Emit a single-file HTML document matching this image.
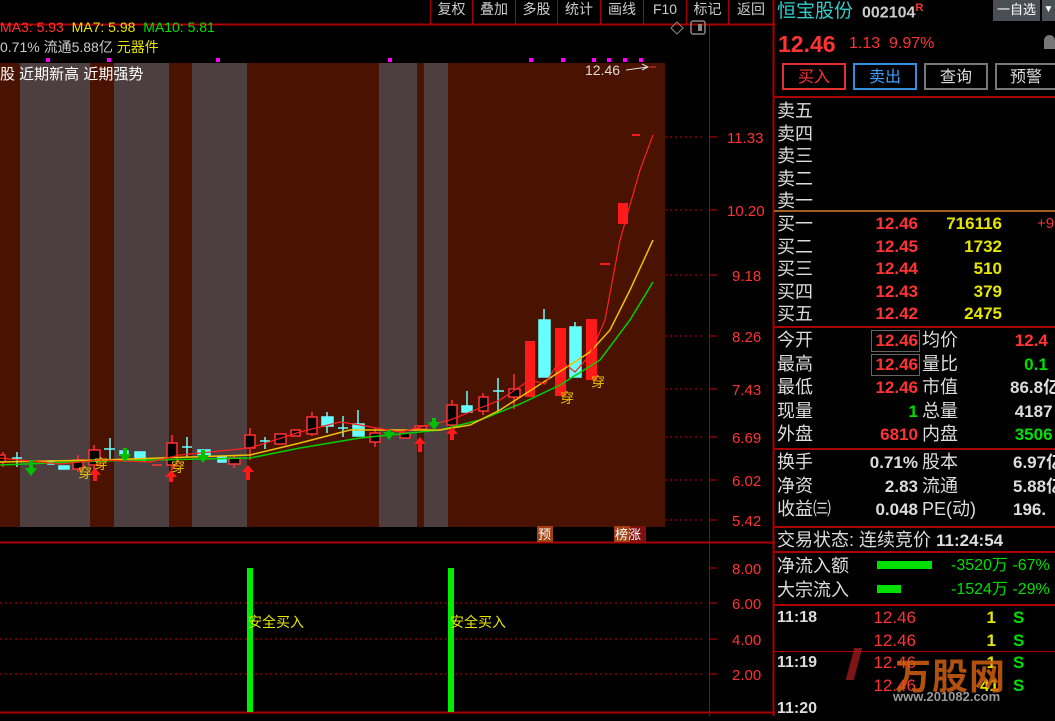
<!DOCTYPE html>
<html><head><meta charset="utf-8">
<style>
*{margin:0;padding:0;box-sizing:border-box}
body{width:1055px;height:716px;background:#000;overflow:hidden;position:relative;font-family:"Liberation Sans","Noto Sans CJK SC",sans-serif;color:#ddd}
.a{position:absolute;white-space:nowrap}
.tb{position:absolute;top:0;height:24px;border-left:1px solid #a00;color:#ccc;font-size:14px;line-height:18px;text-align:center}
.r{color:#ff3333}.y{color:#e6e600}.g{color:#00e000}.w{color:#ddd}.c{color:#33cccc}
.row{position:absolute;left:777px;font-size:18px;line-height:22px;white-space:nowrap}
.btn{position:absolute;top:63px;width:64px;height:27px;font-size:16px;line-height:25px;text-align:center;border:2px solid #777}
.num{position:absolute;font-size:17px;font-weight:bold;line-height:22px;text-align:right;white-space:nowrap}
.hl{position:absolute;left:774px;width:281px;height:2px;background:#a00}
</style></head><body>

<svg class="a" style="left:0;top:0" width="775" height="716">
<rect x="0" y="63" width="665" height="464" fill="#4a1200"/>
<g fill="#4d3f3f">
<rect x="20" y="63" width="70" height="464"/><rect x="114" y="63" width="55" height="464"/><rect x="192" y="63" width="55" height="464"/><rect x="379" y="63" width="38" height="464"/><rect x="424" y="63" width="24" height="464"/>
</g>
<g fill="#ff00ff"><rect x="46" y="58" width="4" height="4"/><rect x="107" y="58" width="4" height="4"/><rect x="216" y="58" width="4" height="4"/><rect x="388" y="58" width="4" height="4"/><rect x="529" y="58" width="4" height="4"/><rect x="561" y="58" width="4" height="4"/><rect x="592" y="58" width="4" height="4"/><rect x="607" y="58" width="4" height="4"/><rect x="623" y="58" width="4" height="4"/><rect x="639" y="58" width="4" height="4"/></g>
<line x1="0" y1="24.5" x2="775" y2="24.5" stroke="#a00" stroke-width="2"/>
<line x1="709.5" y1="24" x2="709.5" y2="716" stroke="#a00"/>
<line x1="773.5" y1="0" x2="773.5" y2="716" stroke="#a00" stroke-width="2"/>
<line x1="0" y1="542.5" x2="775" y2="542.5" stroke="#a00" stroke-width="2"/>
<line x1="0" y1="712.5" x2="775" y2="712.5" stroke="#a00" stroke-width="2"/>
<g stroke="#c00" stroke-dasharray="2,3">
<line x1="665" y1="137" x2="705" y2="137"/><line x1="665" y1="210" x2="705" y2="210"/><line x1="665" y1="275" x2="705" y2="275"/><line x1="665" y1="336" x2="705" y2="336"/><line x1="665" y1="389" x2="705" y2="389"/><line x1="665" y1="437" x2="705" y2="437"/><line x1="665" y1="480" x2="705" y2="480"/><line x1="665" y1="520" x2="705" y2="520"/>
<line x1="0" y1="603" x2="705" y2="603"/><line x1="0" y1="639" x2="705" y2="639"/><line x1="0" y1="674" x2="705" y2="674"/>
</g>
<g stroke="#c00"><line x1="709" y1="137" x2="717" y2="137"/><line x1="709" y1="210" x2="717" y2="210"/><line x1="709" y1="275" x2="717" y2="275"/><line x1="709" y1="336" x2="717" y2="336"/><line x1="709" y1="389" x2="717" y2="389"/><line x1="709" y1="437" x2="717" y2="437"/><line x1="709" y1="480" x2="717" y2="480"/><line x1="709" y1="520" x2="717" y2="520"/><line x1="709" y1="568" x2="717" y2="568"/><line x1="709" y1="603" x2="717" y2="603"/><line x1="709" y1="639" x2="717" y2="639"/><line x1="709" y1="674" x2="717" y2="674"/></g>
<g fill="#ff3333" font-family="Liberation Sans" font-size="15">
<text x="727" y="143">11.33</text><text x="727" y="216">10.20</text><text x="732" y="281">9.18</text><text x="732" y="342">8.26</text><text x="732" y="395">7.43</text><text x="732" y="443">6.69</text><text x="732" y="486">6.02</text><text x="732" y="526">5.42</text>
<text x="732" y="574">8.00</text><text x="732" y="609">6.00</text><text x="732" y="645">4.00</text><text x="732" y="680">2.00</text>
</g>
<g stroke="#ff3333" stroke-width="1.5" fill="#000">
<line x1="3" y1="452" x2="3" y2="467"/><rect x="-2" y="455" width="7" height="7"/>
<line x1="78" y1="455" x2="78" y2="472"/><rect x="73" y="460" width="10" height="9"/>
<line x1="94" y1="445" x2="94" y2="470"/><rect x="89" y="450" width="11" height="15"/>
<line x1="172" y1="435" x2="172" y2="470"/><rect x="167" y="443" width="10" height="22"/>
<line x1="234" y1="455" x2="234" y2="468"/><rect x="229" y="458" width="11" height="6"/>
<line x1="250" y1="428" x2="250" y2="460"/><rect x="245" y="435" width="10" height="13"/>
<rect x="275" y="434" width="11" height="10"/><rect x="291" y="430" width="9" height="6"/>
<line x1="312" y1="412" x2="312" y2="436"/><rect x="307" y="417" width="10" height="17"/>
<line x1="375" y1="428" x2="375" y2="447"/><rect x="370" y="433" width="10" height="9"/>
<rect x="400" y="433" width="10" height="5"/><rect x="415" y="426" width="11" height="3"/>
<line x1="452" y1="400" x2="452" y2="430"/><rect x="447" y="405" width="10" height="20"/>
<line x1="483" y1="393" x2="483" y2="415"/><rect x="479" y="397" width="9" height="14"/>
<line x1="514" y1="374" x2="514" y2="409"/><rect x="509" y="389" width="11" height="8"/>
<line x1="152" y1="465" x2="162" y2="465"/>
</g>
<g fill="#ff1a1a">
<rect x="525" y="341" width="10" height="56"/><rect x="555" y="328" width="11" height="68"/><rect x="586" y="319" width="11" height="61"/>
<rect x="618" y="203" width="10" height="21"/><rect x="600" y="263" width="10" height="2"/><rect x="632" y="134" width="8" height="2"/>
</g>
<g stroke="#66ffff" stroke-width="1.5" fill="#66ffff">
<line x1="17" y1="452" x2="17" y2="467"/><line x1="12" y1="458" x2="22" y2="458"/>
<rect x="48" y="461" width="6" height="3"/><rect x="59" y="466" width="10" height="3"/>
<line x1="110" y1="438" x2="110" y2="460"/><line x1="104" y1="449" x2="115" y2="449"/>
<rect x="120" y="451" width="8" height="4"/><rect x="135" y="452" width="10" height="9"/>
<line x1="187" y1="437" x2="187" y2="457"/><line x1="182" y1="447" x2="192" y2="447"/>
<rect x="198" y="450" width="12" height="5"/><rect x="218" y="457" width="8" height="5"/>
<line x1="265" y1="437" x2="265" y2="449"/><line x1="260" y1="441" x2="270" y2="441"/>
<line x1="327" y1="412" x2="327" y2="433"/><rect x="322" y="417" width="11" height="9"/>
<line x1="343" y1="416" x2="343" y2="437"/><line x1="338" y1="428" x2="348" y2="428"/>
<line x1="358" y1="410" x2="358" y2="436"/><rect x="353" y="424" width="11" height="12"/>
<line x1="467" y1="391" x2="467" y2="412"/><rect x="462" y="406" width="10" height="6"/>
<line x1="498" y1="378" x2="498" y2="413"/><line x1="493" y1="391" x2="504" y2="391"/>
<line x1="544" y1="309" x2="544" y2="377"/><rect x="539" y="320" width="11" height="57"/>
<line x1="575" y1="322" x2="575" y2="377"/><rect x="570" y="327" width="11" height="50"/>
</g>
<polyline fill="none" stroke="#00d000" stroke-width="1.5" points="0,465 100,461 250,458 300,448 360,438 440,430 480,420 520,404 560,385 600,360 630,320 653,282"/>
<polyline fill="none" stroke="#f0c000" stroke-width="1.5" points="0,462 100,460 250,455 300,443 350,430 440,430 470,425 500,410 550,378 590,352 610,330 630,290 653,240"/>
<polyline fill="none" stroke="#ff2020" stroke-width="1.2" points="0,458 60,464 100,460 150,462 180,455 250,448 300,432 340,422 360,425 400,432 450,420 500,400 530,380 545,384 560,360 575,372 590,355 605,320 620,240 640,170 653,135"/>
<g fill="#00c000"><path d="M29,460h4v8h4l-6,8l-6,-8h4z"/><path d="M123,448h4v6h4l-6,8l-6,-8h4z"/><path d="M201,450h4v5h4l-6,8l-6,-8h4z"/><path d="M387,430h4v2h4l-6,8l-6,-8h4z"/><path d="M432,418h4v4h4l-6,8l-6,-8h4z"/></g>
<g fill="#ff1a1a"><path d="M95,468l6,7h-4v6h-4v-6h-4z"/><path d="M171,470l6,7h-4v5h-4v-5h-4z"/><path d="M248,465l6,7h-4v8h-4v-8h-4z"/><path d="M420,437l6,7h-4v8h-4v-8h-4z"/><path d="M452,427l6,7h-4v6h-4v-6h-4z"/></g>
<g fill="#e6c000" font-family="Noto Sans CJK SC" font-size="14"><text x="78" y="478">穿</text><text x="94" y="469">穿</text><text x="171" y="472">穿</text><text x="560" y="403">穿</text><text x="591" y="387">穿</text></g>
<text x="585" y="75" fill="#ddd" font-family="Liberation Sans" font-size="14">12.46</text>
<path d="M626,70l22,-3 M642,64l6,3l-6,3" stroke="#ddd" fill="none"/><line x1="650" y1="67" x2="656" y2="67" stroke="#f33"/>
<rect x="537" y="526" width="16" height="16" fill="#a04010"/><text x="538" y="539" fill="#fff" font-family="Noto Sans CJK SC" font-size="13">预</text>
<rect x="614" y="526" width="16" height="16" fill="#a04010"/><rect x="630" y="526" width="16" height="16" fill="#801010"/><text x="615" y="539" fill="#fff" font-family="Noto Sans CJK SC" font-size="13">榜涨</text>
<rect x="247" y="568" width="6" height="144" fill="#00ee00"/><rect x="448" y="568" width="6" height="144" fill="#00ee00"/>
<g fill="#e6e600" font-family="Noto Sans CJK SC" font-size="14"><text x="248" y="627">安全买入</text><text x="450" y="627">安全买入</text></g>
<path d="M677,22l6,6l-6,6l-6,-6z" fill="none" stroke="#888"/>
<rect x="691" y="21" width="14" height="13" rx="2" fill="none" stroke="#888" stroke-width="1.5"/><rect x="698" y="24" width="4" height="7" fill="#888"/>
</svg>

<div class="tb" style="left:430px;width:42px">复权</div><div class="tb" style="left:472px;width:43px">叠加</div><div class="tb" style="left:515px;width:42px">多股</div><div class="tb" style="left:557px;width:43px">统计</div><div class="tb" style="left:600px;width:43px">画线</div><div class="tb" style="left:643px;width:43px">F10</div><div class="tb" style="left:686px;width:42px">标记</div><div class="tb" style="left:728px;width:45px">返回</div>

<div class="a" style="left:0;top:19px;font-size:14px"><span class="r">MA3: 5.93</span>&nbsp; <span class="y">MA7: 5.98</span>&nbsp; <span class="g">MA10: 5.81</span></div>
<div class="a" style="left:0;top:37px;font-size:14px;color:#ccc">0.71% 流通5.88亿 <span class="y">元器件</span></div>
<div class="a" style="left:0;top:63px;font-size:15px;color:#fff">股 近期新高 近期强势</div>

<div class="a c" style="left:777px;top:0;font-size:19px;line-height:24px">恒宝股份</div>
<div class="a" style="left:862px;top:2px;font-size:16px;font-weight:bold;color:#ccc">002104<sup class="r" style="font-size:11px">R</sup></div>
<div class="a" style="left:993px;top:0;width:47px;height:21px;background:#4a4e55;color:#fff;font-size:13px;line-height:20px;text-align:center">一自选</div>
<div class="a" style="left:1042px;top:0;width:13px;height:21px;background:#4a4e55;color:#fff;font-size:10px;line-height:20px;text-align:center">▼</div>
<div class="a r" style="left:778px;top:31px;font-size:23px;font-weight:bold">12.46</div>
<div class="a r" style="left:849px;top:35px;font-size:16px">1.13&nbsp; 9.97%</div>
<div class="a" style="left:1044px;top:35px;width:11px;height:14px;background:#777;border-radius:6px 6px 0 0"></div>
<div class="btn r" style="left:782px;border-color:#e03030">买入</div>
<div class="btn" style="left:853px;border-color:#3090e0;color:#3aa0ff">卖出</div>
<div class="btn w" style="left:924px">查询</div>
<div class="btn w" style="left:995px;width:62px">预警</div>
<div class="hl" style="top:96px"></div>
<div class="row w" style="top:100px;line-height:22.5px">卖五<br>卖四<br>卖三<br>卖二<br>卖一</div>
<div class="a" style="left:774px;top:210px;width:281px;height:2px;background:#a06020"></div>
<div class="row w" style="top:213px;line-height:22.6px">买一<br>买二<br>买三<br>买四<br>买五</div>
<div class="num r" style="left:850px;top:213px;width:68px;line-height:22.6px">12.46<br>12.45<br>12.44<br>12.43<br>12.42</div>
<div class="num y" style="left:930px;top:213px;width:72px;line-height:22.6px">716116<br>1732<br>510<br>379<br>2475</div>
<div class="a r" style="left:1037px;top:215px;font-size:15px">+9</div>
<div class="hl" style="top:326px"></div>
<div class="row w" style="top:329px;line-height:23.5px">今开<br>最高<br>最低<br>现量<br>外盘</div>
<div class="a" style="left:871px;top:330px;width:49px;height:22px;border:1px solid #666"></div>
<div class="a" style="left:871px;top:354px;width:49px;height:22px;border:1px solid #666"></div>
<div class="num" style="left:850px;top:329px;width:68px;line-height:23.5px"><span class="r">12.46<br>12.46<br>12.46</span><br><span class="g">1</span><br><span class="r">6810</span></div>
<div class="row w" style="left:922px;top:329px;line-height:23.5px">均价<br>量比<br>市值<br>总量<br>内盘</div>
<div class="num" style="left:1010px;top:329px;line-height:23.5px;text-align:left"><span class="r">&nbsp;12.4</span><br><span class="g">&nbsp;&nbsp;&nbsp;0.1</span><br><span class="w">86.8亿</span><br><span class="w">&nbsp;4187</span><br><span class="g">&nbsp;3506</span></div>
<div class="hl" style="top:448px"></div>
<div class="row w" style="top:451px;line-height:23.5px">换手<br>净资<br>收益㈢</div>
<div class="num w" style="left:850px;top:451px;width:68px;line-height:23.5px">0.71%<br>2.83<br>0.048</div>
<div class="row w" style="left:922px;top:451px;line-height:23.5px">股本<br>流通<br>PE(动)</div>
<div class="num w" style="left:1013px;top:451px;line-height:23.5px;text-align:left">6.97亿<br>5.88亿<br>196.</div>
<div class="hl" style="top:526px"></div>
<div class="row w" style="top:529px">交易状态: 连续竞价 <b style="font-size:17px">11:24:54</b></div>
<div class="hl" style="top:551px"></div>
<div class="row w" style="top:554px;line-height:24px">净流入额<br>大宗流入</div>
<div class="a" style="left:877px;top:561px;width:55px;height:8px;background:#00e000"></div>
<div class="a" style="left:877px;top:585px;width:24px;height:8px;background:#00e000"></div>
<div class="a g" style="left:951px;top:554px;font-size:16px;line-height:24px">-3520万 -67%<br>-1524万 -29%</div>
<div class="hl" style="top:604px"></div>
<div class="a" style="left:774px;top:651px;width:281px;border-top:1px dotted #c00"></div>
<div class="a" style="left:777px;top:607px;font-size:16px;font-weight:bold;line-height:22.7px;color:#ddd">11:18<br><br>11:19<br><br>11:20</div>
<div class="num r" style="left:850px;top:607px;width:66px;line-height:22.7px;font-weight:normal">12.46<br>12.46<br>12.46<br>12.46</div>
<div class="num" style="left:980px;top:607px;width:16px;line-height:22.7px"><span class="y">1<br>1<br>1<br>41</span></div>
<div class="a g" style="left:1013px;top:607px;font-size:17px;font-weight:bold;line-height:22.7px">S<br>S<br>S<br>S</div>
<div class="a" style="left:895px;top:648px;font-size:36px;font-weight:bold;color:#d06010;opacity:.85;letter-spacing:1px">万股网</div>
<div class="a" style="left:893px;top:689px;font-size:13px;font-weight:bold;color:#999">www.201082.com</div>
<div class="a" style="left:850px;top:648px;width:8px;height:32px;background:#b02020;opacity:.7;transform:skewX(-15deg)"></div>
</body></html>
